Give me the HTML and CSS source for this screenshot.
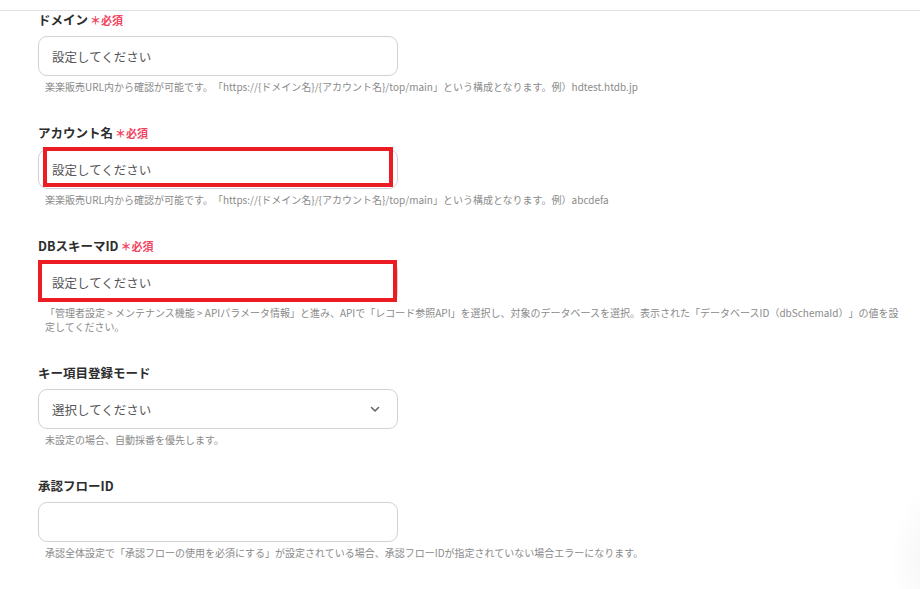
FILE: index.html
```html
<!DOCTYPE html>
<html lang="ja">
<head>
	<meta charset="UTF-8">
	<title>楽楽販売 設定</title>
	<link rel="stylesheet" href="styles.css">
</head>
<body>
	<div class="topbar"></div>
	<div class="form">
		<div class="field">
			<div class="label">ドメイン<span class="req">＊必須</span></div>
			<div class="control">
				<input class="text" placeholder="設定してください">
			</div>
			<p class="help">楽楽販売URL内から確認が可能です。「https://{ドメイン名}/{アカウント名}/top/main」という構成となります。例）hdtest.htdb.jp</p>
		</div>
		<div class="field">
			<div class="label">アカウント名<span class="req">＊必須</span></div>
			<div class="control">
				<input class="text" placeholder="設定してください">
				<div class="mark mark-a"></div>
			</div>
			<p class="help">楽楽販売URL内から確認が可能です。「https://{ドメイン名}/{アカウント名}/top/main」という構成となります。例）abcdefa</p>
		</div>
		<div class="field">
			<div class="label">DBスキーマID<span class="req">＊必須</span></div>
			<div class="control">
				<input class="text" placeholder="設定してください">
				<div class="mark mark-b"></div>
			</div>
			<p class="help">「管理者設定 &gt; メンテナンス機能 &gt; APIパラメータ情報」と進み、APIで「レコード参照API」を選択し、対象のデータベースを選択。表示された「データベースID（dbSchemaId）」の値を設定してください。</p>
		</div>
		<div class="field">
			<div class="label">キー項目登録モード</div>
			<div class="control">
				<div class="select">
					<span>選択してください</span>
					<svg width="12" height="12" viewBox="0 0 12 12"><path d="M2.5 4.5 L6 8 L9.5 4.5" fill="none" stroke="#666" stroke-width="1.6" stroke-linecap="round" stroke-linejoin="round"/></svg>
				</div>
			</div>
			<p class="help">未設定の場合、自動採番を優先します。</p>
		</div>
		<div class="field">
			<div class="label">承認フローID</div>
			<div class="control">
				<input class="text">
			</div>
			<p class="help">承認全体設定で「承認フローの使用を必須にする」が設定されている場合、承認フローIDが指定されていない場合エラーになります。</p>
		</div>
	</div>
	<div class="shade"></div>
</body>
</html>
```

FILE: styles.css
```css
* {
	box-sizing: border-box;
}
body {
	margin: 0;
	background: #fff;
	font-family: "Noto Sans CJK JP", "Noto Sans", sans-serif;
	color: #333;
	text-spacing-trim: space-all;
	overflow: hidden;
}
.topbar {
	height: 11px;
	border-bottom: 1px solid #e2e2e2;
}
.form {
	padding: 0 20px 0 38px;
}
.field {
	margin-bottom: 30px;
}
.label {
	height: 18px;
	line-height: 18px;
	font-size: 12.5px;
	font-weight: bold;
	color: #2d2d2d;
}
.req {
	margin-left: 2px;
	font-size: 11px;
	color: #f2455f;
}
.control {
	position: relative;
	width: 360px;
	margin-top: 7px;
}
.text,
.select {
	display: block;
	width: 360px;
	height: 40px;
	padding: 0 13px;
	border: 1px solid #cfd3d8;
	border-radius: 9px;
	background: #fff;
	font-family: inherit;
	font-size: 12.5px;
	color: #333;
	outline: none;
}
.text::placeholder {
	color: #555;
}
.select {
	display: flex;
	align-items: center;
	justify-content: space-between;
	color: #555;
	padding-right: 16px;
}
.help {
	margin: 4px 0 0 7px;
	line-height: 14px;
	font-size: 10px;
	color: #8a8a8a;
}
/* 注釈の赤枠 */
.mark {
	position: absolute;
	border: 4px solid #ec1c24;
}
.mark-a {
	top: -2px;
	left: 5px;
	width: 350px;
	height: 40px;
}
.mark-b {
	top: -2px;
	left: 0;
	width: 359px;
	height: 42px;
}
.shade {
	position: fixed;
	right: -60px;
	bottom: -40px;
	width: 90px;
	height: 140px;
	border-radius: 50%;
	background: radial-gradient(closest-side, rgba(0,0,0,0.04), rgba(0,0,0,0));
}
```
